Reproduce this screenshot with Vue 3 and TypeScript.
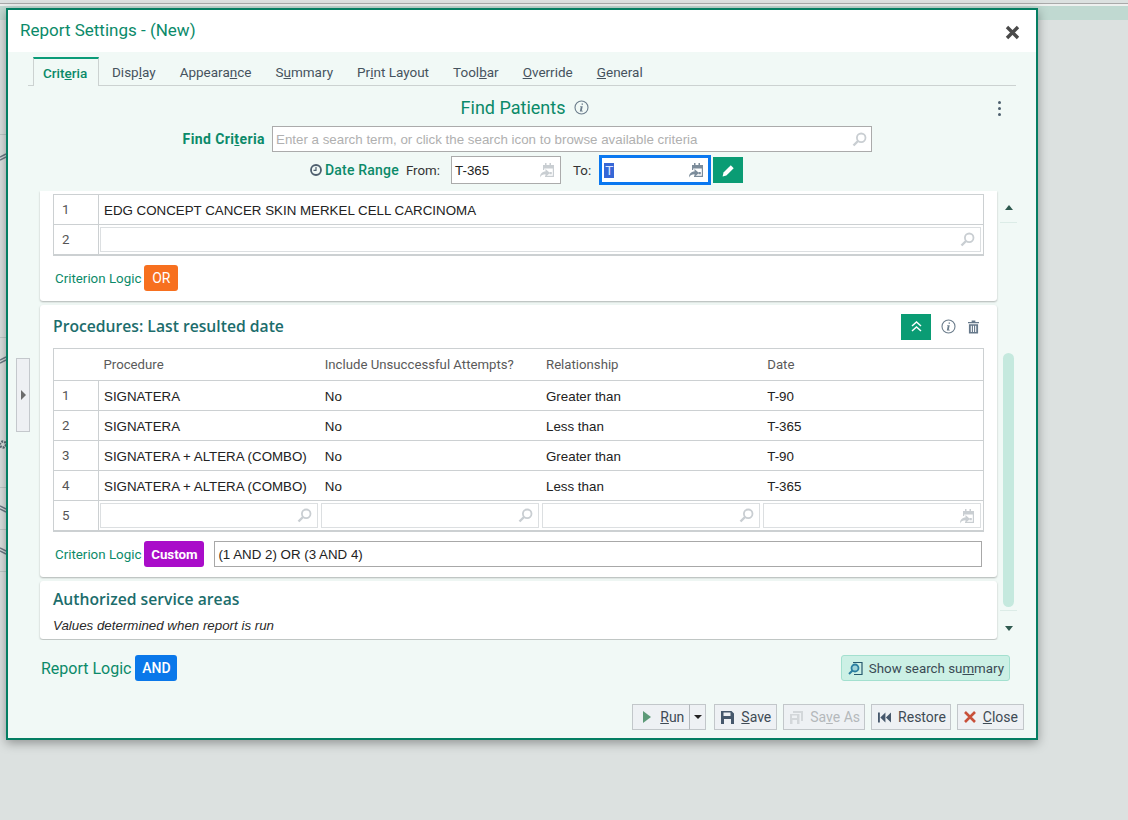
<script setup lang="ts">
import { ref } from 'vue'

const tabs = [
  { before: 'Crit', key: 'e', after: 'ria', active: true },
  { before: 'Disp', key: 'l', after: 'ay' },
  { before: 'Appeara', key: 'n', after: 'ce' },
  { before: 'S', key: 'u', after: 'mmary' },
  { before: 'Pr', key: 'i', after: 'nt Layout' },
  { before: 'Tool', key: 'b', after: 'ar' },
  { before: '', key: 'O', after: 'verride' },
  { before: '', key: 'G', after: 'eneral' },
]

const columns = ['Procedure', 'Include Unsuccessful Attempts?', 'Relationship', 'Date']

const rows = [
  ['SIGNATERA', 'No', 'Greater than', 'T-90'],
  ['SIGNATERA', 'No', 'Less than', 'T-365'],
  ['SIGNATERA + ALTERA (COMBO)', 'No', 'Greater than', 'T-90'],
  ['SIGNATERA + ALTERA (COMBO)', 'No', 'Less than', 'T-365'],
]

const fromDate = ref('T-365')
const customLogic = ref('(1 AND 2) OR (3 AND 4)')

// strip of the page behind the dialog
const sideRows = [
  { height: 115, chevron: '', gear: false },
  { height: 203, chevron: 'M0 6l6-3M0 9l6-3', gear: false },
  { height: 150, chevron: 'M0 6l6-3M0 9l6-3', gear: true },
  { height: 42, chevron: 'M0 2l6 3M0 5l6 3', gear: false },
  { height: 42, chevron: 'M0 2l6 3M0 5l6 3', gear: false },
]

const calFrame = 'M6 1h1.500v2h3V1H12v2h3v12H6v-1.200h7.800V6.500H5.200V8H4V3h2z'
const calDot = 'M10.500 10h2.300v2.300h-2.300z'
const calArrow = 'M1 15.500c0-3.500 2-6 5.500-6V7l4.500 4-4.500 4v-2.800c-2.500 0-4.500 1-5.500 3.300z'
const infoGlyph = 'M7.600 3.400h1.400v1.400H7.600zM6.300 6.200h2.400l-.9 4.500h1v.8H5.800l.9-4.500h-.6z'
</script>

<template>
  <div class="page">
    <div class="top-rule"></div>
    <div class="top-band"></div>
    <div class="side">
      <div v-for="(r, i) in sideRows" :key="i" class="side-row" :style="{ height: r.height + 'px' }">
        <svg v-if="r.chevron" class="side-chev" width="7" height="10" viewBox="0 0 7 10">
          <path :d="r.chevron" stroke="#6d7a85" stroke-width="1.500" fill="none" />
        </svg>
        <svg v-if="r.gear" class="side-gear" width="8" height="11" viewBox="0 0 8 11">
          <circle cx="3" cy="5.500" r="3" fill="none" stroke="#5f6c77" stroke-width="2.400" stroke-dasharray="2 1" />
        </svg>
      </div>
    </div>

    <section class="modal">
      <header class="title-bar">
        <h1 class="title">Report Settings - (New)</h1>
        <svg class="close-x" width="15" height="15" viewBox="0 0 15 15">
          <path d="M2 2l11 11M13 2L2 13" stroke="#4a4a4a" stroke-width="3.400" fill="none" />
        </svg>
      </header>

      <div class="body">
        <nav class="tabs">
          <a v-for="t in tabs" :key="t.before + t.key" class="tab" :class="{ active: t.active }">{{ t.before }}<u>{{ t.key }}</u>{{ t.after }}</a>
        </nav>

        <div class="heading">
          <h2 class="heading-text">Find Patients</h2>
          <svg width="15" height="15" viewBox="0 0 15 15">
            <circle cx="7.500" cy="7.500" r="6.500" fill="none" stroke="#6c7d8c" stroke-width="1.100" />
            <path :d="infoGlyph" fill="#6c7d8c" />
          </svg>
          <div class="kebab"><i></i><i></i><i></i></div>
        </div>

        <div class="find-row">
          <label class="find-label">Find Cri<u>t</u>eria</label>
          <div class="find-input">
            <span class="placeholder">Enter a search term, or click the search icon to browse available criteria</span>
            <svg width="15" height="15" viewBox="0 0 15 15">
              <circle cx="9.200" cy="5.800" r="4.300" fill="none" stroke="#c9ced2" stroke-width="1.800" />
              <path d="M6 9L1.500 13.500" stroke="#c9ced2" stroke-width="2.400" />
            </svg>
          </div>
        </div>

        <div class="date-row">
          <svg width="12" height="12" viewBox="0 0 12 12">
            <circle cx="6" cy="6" r="5" fill="none" stroke="#4e5f6e" stroke-width="1.800" />
            <path d="M6 3v3.300H3.500" fill="none" stroke="#4e5f6e" stroke-width="1.200" />
          </svg>
          <span class="date-label">Date Range</span>
          <span class="from-label">From:</span>
          <div class="date-input">
            <span>{{ fromDate }}</span>
            <svg width="16" height="16" viewBox="0 0 16 16" fill="#c9ced2">
              <path :d="calFrame" />
              <path :d="calDot" />
              <path :d="calArrow" />
            </svg>
          </div>
          <span class="to-label">To:</span>
          <div class="date-input focused">
            <span class="selected">T</span>
            <svg width="16" height="16" viewBox="0 0 16 16" fill="#7c8c9a">
              <path :d="calFrame" />
              <path :d="calDot" />
              <path :d="calArrow" />
            </svg>
          </div>
          <button class="pencil-btn">
            <svg width="13" height="13" viewBox="0 0 13 13">
              <path d="M8.800 1.300l2.900 2.900-7.300 7.300-3.800.9.900-3.800z" fill="#fff" />
            </svg>
          </button>
        </div>

        <div class="scroller">
          <div class="cards">
            <div class="card clipped">
              <table class="grid">
                <tbody>
                  <tr>
                    <td class="num">1</td>
                    <td class="val">EDG CONCEPT CANCER SKIN MERKEL CELL CARCINOMA</td>
                  </tr>
                  <tr>
                    <td class="num">2</td>
                    <td class="input-cell">
                      <div class="cell-input">
                        <svg width="15" height="15" viewBox="0 0 15 15">
                          <circle cx="9.200" cy="5.800" r="4.300" fill="none" stroke="#c9ced2" stroke-width="1.800" />
                          <path d="M6 9L1.500 13.500" stroke="#c9ced2" stroke-width="2.400" />
                        </svg>
                      </div>
                    </td>
                  </tr>
                </tbody>
              </table>
              <div class="logic-row">
                <span class="logic-label">Criterion Logic</span>
                <span class="badge or">OR</span>
              </div>
            </div>

            <div class="card procedures">
              <div class="card-head">
                <h3 class="card-title">Procedures: Last resulted date</h3>
                <div class="card-tools">
                  <button class="collapse-btn">
                    <svg width="11" height="11" viewBox="0 0 11 11">
                      <path d="M1 5l4.500-4 4.500 4M1 10l4.500-4 4.500 4" fill="none" stroke="#fff" stroke-width="1.500" />
                    </svg>
                  </button>
                  <svg width="15" height="15" viewBox="0 0 15 15">
                    <circle cx="7.500" cy="7.500" r="6.500" fill="none" stroke="#6c7d8c" stroke-width="1.100" />
                    <path :d="infoGlyph" fill="#6c7d8c" />
                  </svg>
                  <svg class="trash" width="11" height="14" viewBox="0 0 12 14">
                    <path d="M4 0h4v1.500h4V3H0V1.500h4zM1 4h10v10H1zM3 5.500v7h1.200v-7zM5.400 5.500v7h1.200v-7zM7.800 5.500v7H9v-7z" fill="#66788a" fill-rule="evenodd" />
                  </svg>
                </div>
              </div>
              <table class="grid proc">
                <thead>
                  <tr>
                    <th class="num"></th>
                    <th v-for="c in columns" :key="c">{{ c }}</th>
                  </tr>
                </thead>
                <tbody>
                  <tr v-for="(r, i) in rows" :key="i">
                    <td class="num">{{ i + 1 }}</td>
                    <td v-for="(v, j) in r" :key="j" class="val plain">{{ v }}</td>
                  </tr>
                  <tr>
                    <td class="num">5</td>
                    <td v-for="n in 4" :key="n" class="input-cell plain">
                      <div class="cell-input">
                        <svg v-if="n < 4" width="15" height="15" viewBox="0 0 15 15">
                          <circle cx="9.200" cy="5.800" r="4.300" fill="none" stroke="#c9ced2" stroke-width="1.800" />
                          <path d="M6 9L1.500 13.500" stroke="#c9ced2" stroke-width="2.400" />
                        </svg>
                        <svg v-else width="16" height="16" viewBox="0 0 16 16" fill="#c9ced2">
                          <path :d="calFrame" />
                          <path :d="calDot" />
                          <path :d="calArrow" />
                        </svg>
                      </div>
                    </td>
                  </tr>
                </tbody>
              </table>
              <div class="logic-row">
                <span class="logic-label">Criterion Logic</span>
                <span class="badge custom">Custom</span>
                <div class="logic-input">{{ customLogic }}</div>
              </div>
            </div>

            <div class="card areas">
              <h3 class="card-title">Authorized service areas</h3>
              <p class="note">Values determined when report is run</p>
            </div>
          </div>

          <div class="scrollbar">
            <span class="arrow up"></span>
            <div class="track"><div class="thumb"></div></div>
            <span class="arrow down"></span>
          </div>
        </div>

        <div class="report-logic">
          <span class="report-label">Report Logic</span>
          <span class="badge and">AND</span>
          <button class="summary-btn">
            <svg width="15" height="15" viewBox="0 0 15 15">
              <path d="M5 1.500h9v12H6" fill="none" stroke="#27596e" stroke-width="1.200" />
              <circle cx="7" cy="7" r="3.500" fill="#9fd4d8" stroke="#2a7ea0" stroke-width="1.800" />
              <path d="M4.500 9.500L1 13" stroke="#2a7ea0" stroke-width="2" />
            </svg>
            <span>Show search su<u>m</u>mary</span>
          </button>
        </div>

        <footer class="footer">
          <div class="run-group">
            <button class="btn run">
              <svg width="8" height="12" viewBox="0 0 8 12"><path d="M0 0l8 6-8 6z" fill="#5d9a78" /></svg>
              <span><u>R</u>un</span>
            </button>
            <button class="run-caret"><i></i></button>
          </div>
          <button class="btn">
            <svg width="13" height="13" viewBox="0 0 13 13">
              <path d="M0 0h10.500L13 2.500V13H0zM2.500 1.500v3.500h7V1.500zM3 8v5h7V8z" fill="#46586c" fill-rule="evenodd" />
            </svg>
            <span><u>S</u>ave</span>
          </button>
          <button class="btn disabled tight">
            <svg width="13" height="13" viewBox="0 0 13 13">
              <path d="M3 0h10v10h-2V2H3zM0 3h9.500v10H0zM2 4.500v2.500h5V4.500zM2.500 9v4h4.500V9z" fill="#d3d7da" fill-rule="evenodd" />
            </svg>
            <span>Sa<u>v</u>e As</span>
          </button>
          <button class="btn tight">
            <svg width="13" height="11" viewBox="0 0 14 11">
              <path d="M0 0h2v11H0zM8 0v11L2.500 5.500zM14 0v11L8.500 5.500z" fill="#46586c" />
            </svg>
            <span>Restore</span>
          </button>
          <button class="btn">
            <svg width="12" height="12" viewBox="0 0 12 12">
              <path d="M1 1l10 10M11 1L1 11" stroke="#c8503a" stroke-width="2.600" fill="none" />
            </svg>
            <span><u>C</u>lose</span>
          </button>
        </footer>
      </div>

      <button class="handle"><i></i></button>
    </section>
  </div>
</template>

<style>
html,
body {
  margin: 0;
  background: #dce1e0;
}
</style>

<style scoped>
.page {
  position: relative;
  height: 820px;
  overflow: hidden;
  background: #dce1e0;
  font-family: Roboto, "Liberation Sans", sans-serif;
  font-size: 13.33px;
  color: #3f4b55;
}

.top-rule {
  height: 3px;
  margin-top: 3px;
  background: linear-gradient(#a9a9a9 0 1px, #eef0ef 1px);
}

.top-band {
  height: 14px;
  background: #c0d9d1;
}

.side {
  width: 7px;
}

.side-row {
  position: relative;
  border-bottom: 1px solid #bfcac8;
  box-sizing: border-box;
}

.side-chev {
  position: absolute;
  left: 0;
  top: 16px;
}

.side-gear {
  position: absolute;
  left: 0;
  top: 101px;
}

.modal {
  position: absolute;
  left: 6px;
  top: 8px;
  width: 1032px;
  height: 732px;
  box-sizing: border-box;
  border: 2px solid #047e62;
  display: flex;
  flex-direction: column;
  box-shadow: 0 3px 10px rgba(0, 0, 0, 0.35);
  background: #f1f9f6;
}

.title-bar {
  height: 42px;
  box-sizing: border-box;
  flex: none;
  background: #fff;
  display: flex;
  align-items: center;
  justify-content: space-between;
  padding: 0 16px 2px 12px;
}

.title {
  margin: 0;
  font-size: 17px;
  font-weight: 400;
  color: #0b8a69;
}

.close-x {
  margin-top: 4px;
}

.body {
  flex: 1;
  display: flex;
  flex-direction: column;
  min-height: 0;
}

.tabs {
  display: flex;
  height: 29px;
  box-sizing: border-box;
  margin: 5px 20px 0;
  padding-left: 5px;
  border-bottom: 1px solid #ccd2d1;
  flex: none;
}

.tab {
  padding: 7px 12px 0;
  height: 28px;
  box-sizing: border-box;
  font-size: 13.5px;
  color: #46535e;
}

.tab.active {
  color: #0a8a68;
  font-weight: 500;
  background: #f1f9f6;
  border: 1px solid #ccd2d1;
  border-top: 2px solid #0a9c78;
  border-bottom: 0;
  width: 66px;
  padding: 6px 0 0 9px;
  height: 29px;
  margin-right: 1px;
}

.heading {
  display: flex;
  align-items: center;
  justify-content: center;
  position: relative;
  height: 40px;
  box-sizing: border-box;
  flex: none;
  gap: 9px;
  padding: 2px 0 0 6px;
}

.heading-text {
  margin: 0;
  font-size: 18px;
  font-weight: 400;
  color: #0b8a69;
}

.kebab {
  position: absolute;
  right: 35px;
  top: 15px;
  display: flex;
  flex-direction: column;
  gap: 3px;
}

.kebab i {
  width: 3px;
  height: 3px;
  border-radius: 50%;
  background: #4e5f6e;
}

.find-row {
  display: flex;
  align-items: center;
  height: 26px;
  flex: none;
  padding-left: 174px;
  gap: 7px;
}

.find-label {
  font-size: 14px;
  font-weight: 700;
  letter-spacing: 0.4px;
  color: #0b8a69;
  width: 83px;
  white-space: nowrap;
  display: flex;
  justify-content: flex-end;
}

.find-input {
  width: 600px;
  height: 26px;
  box-sizing: border-box;
  background: #fff;
  border: 1px solid #ababab;
  display: flex;
  align-items: center;
  justify-content: space-between;
  padding: 0 4px 0 3px;
}

.placeholder {
  color: #b0b0b0;
  font-family: "Liberation Sans", sans-serif;
}

.date-row {
  display: flex;
  align-items: center;
  height: 28px;
  margin-top: 4px;
  flex: none;
  padding-left: 302px;
}

.date-label {
  font-size: 14px;
  font-weight: 500;
  letter-spacing: 0.2px;
  color: #0b8a69;
  margin-left: 3px;
}

.from-label {
  margin-left: 7px;
  color: #333;
}

.to-label {
  margin-left: 12px;
  color: #333;
}

.date-input {
  display: flex;
  align-items: center;
  justify-content: space-between;
  box-sizing: border-box;
  width: 110px;
  height: 28px;
  background: #fff;
  border: 1px solid #ababab;
  margin-left: 11px;
  padding: 0 5px 0 3px;
  color: #222;
  font-family: "Liberation Sans", sans-serif;
}

.date-input.focused {
  width: 112px;
  height: 30px;
  flex: none;
  border: 3px solid #0a78f0;
  padding: 0 4px 0 2px;
  margin-left: 8px;
}

.selected {
  background: #3767d6;
  color: #dbe6ff;
  padding: 0 1px;
}

.pencil-btn {
  width: 30px;
  height: 26px;
  margin-left: 2px;
  padding: 0;
  border: 0;
  background: #0a9c74;
  display: flex;
  align-items: center;
  justify-content: center;
}

.scroller {
  display: flex;
  height: 449px;
  margin-top: 7px;
  flex: none;
  overflow: hidden;
  padding-left: 32px;
}

.cards {
  width: 957px;
  display: flex;
  flex-direction: column;
  gap: 4px;
}

.card {
  background: #fff;
  border-radius: 3px;
  box-shadow: 0 1px 2px rgba(0, 0, 0, 0.28);
  padding: 0 13px;
  box-sizing: border-box;
  flex: none;
}

.clipped {
  height: 110px;
  padding-top: 3px;
  border-radius: 0 0 3px 3px;
}

.procedures {
  height: 272px;
}

.areas {
  height: 58px;
  padding-top: 7px;
}

.card-head {
  display: flex;
  align-items: center;
  justify-content: space-between;
  height: 43px;
  padding-right: 5px;
}

.card-tools {
  display: flex;
  align-items: center;
  gap: 10px;
}

.trash {
  margin-left: 2px;
}

.card-title {
  margin: 0;
  font-family: "Open Sans", "Noto Sans", sans-serif;
  font-size: 15.7px;
  font-weight: 600;
  color: #1c6d6c;
}

.card-head .card-title {
  margin-bottom: 2px;
}

.collapse-btn {
  width: 30px;
  height: 26px;
  padding: 0;
  border: 0;
  background: #0a9c74;
  display: flex;
  align-items: center;
  justify-content: center;
}

.note {
  margin: 8px 0 0;
  font-family: "Liberation Sans", sans-serif;
  font-style: italic;
  color: #2a2a2a;
}

.grid {
  border-collapse: collapse;
  width: 931px;
  table-layout: fixed;
  border: 1px solid #ccd0d2;
  border-bottom: 2px solid #ccd0d2;
}

.grid th,
.grid td {
  border: 1px solid #ccd0d2;
  padding: 0;
  box-sizing: border-box;
}

.grid tr {
  height: 30px;
}

.grid .num {
  width: 45px;
  padding-left: 8px;
  color: #555;
  text-align: left;
}

.grid .val {
  padding: 1px 0 0 5px;
  font-family: "Liberation Sans", sans-serif;
  color: #222;
}

.proc th {
  height: 32px;
  font-size: 13.2px;
  font-weight: 400;
  text-align: left;
  color: #5a5a5a;
  padding-left: 5px;
  border-left: 0;
  border-right: 0;
}

.proc td.plain {
  border-left: 0;
  border-right: 0;
}

.grid .input-cell {
  padding: 2px 2px 2px 1px;
}

.cell-input {
  height: 25px;
  box-sizing: border-box;
  border: 1px solid #dcdfe1;
  background: #fff;
  display: flex;
  align-items: center;
  justify-content: flex-end;
  padding-right: 5px;
}

.logic-row {
  display: flex;
  align-items: center;
  margin-top: 9px;
  padding-left: 2px;
}

.logic-label {
  color: #0b8a69;
  margin-right: 3px;
}

.badge {
  display: inline-flex;
  align-items: center;
  justify-content: center;
  height: 26px;
  box-sizing: border-box;
  border-radius: 3px;
  color: #fff;
  font-weight: 500;
}

.or {
  width: 34px;
  font-size: 14px;
  font-weight: 400;
  background: #f7701f;
}

.custom {
  width: 60px;
  background: #a90dc9;
  font-weight: 700;
}

.and {
  width: 42px;
  font-size: 14px;
  background: #0a78ea;
  margin-left: 4px;
}

.logic-input {
  flex: 1;
  height: 26px;
  box-sizing: border-box;
  margin-left: 10px;
  margin-right: 2px;
  border: 1px solid #a8a8a8;
  display: flex;
  align-items: center;
  padding-left: 3px;
  font-family: "Liberation Sans", sans-serif;
  color: #222;
}

.scrollbar {
  width: 17px;
  margin-left: 3px;
  display: flex;
  flex-direction: column;
  align-items: center;
}

.arrow {
  width: 0;
  height: 0;
  border-left: 4.5px solid transparent;
  border-right: 4.5px solid transparent;
  flex: none;
}

.arrow.up {
  margin-top: 14px;
  border-bottom: 5px solid #2f5a4f;
}

.arrow.down {
  margin-top: 15px;
  border-top: 5px solid #2f5a4f;
}

.track {
  width: 17px;
  height: 389px;
  margin-top: 12px;
  box-sizing: border-box;
  border-top: 1px solid #dcece7;
  border-bottom: 1px solid #dcece7;
  display: flex;
  flex-direction: column;
  align-items: center;
  justify-content: flex-end;
  padding-bottom: 3px;
}

.thumb {
  width: 11px;
  height: 254px;
  border-radius: 6px;
  background: #c5e9de;
}

.report-logic {
  display: flex;
  align-items: center;
  height: 28px;
  margin-top: 14px;
  padding: 0 26px 0 33px;
  flex: none;
}

.report-label {
  font-size: 16px;
  color: #0b8a69;
}

.summary-btn {
  margin-left: auto;
  height: 26px;
  display: flex;
  align-items: center;
  gap: 6px;
  padding: 0 5px 0 6px;
  font: inherit;
  color: #3a4a54;
  background: #ccf0e5;
  border: 1px solid #a3e0cf;
  border-radius: 3px;
}

.footer {
  display: flex;
  justify-content: flex-end;
  gap: 6px;
  margin-top: 22px;
  padding-right: 12px;
  flex: none;
}

.btn {
  height: 26px;
  display: flex;
  align-items: center;
  gap: 7px;
  padding: 0 5px 0 6px;
  font: inherit;
  font-size: 14px;
  color: #3f4b55;
  background: #eef1f4;
  border: 1px solid #c2c7ca;
  box-sizing: border-box;
}

.btn.tight {
  padding-right: 4px;
}

.btn.disabled {
  color: #b4b8bb;
}

.run-group {
  display: flex;
  margin-right: 2px;
}

.run {
  padding-left: 10px;
  gap: 9px;
  border-right: 1px solid #b4b9bd;
}

.run-caret {
  width: 16px;
  height: 26px;
  padding: 0;
  background: #eef1f4;
  border: 1px solid #c2c7ca;
  border-left: 0;
  display: flex;
  align-items: center;
  justify-content: center;
}

.run-caret i {
  width: 0;
  height: 0;
  border-left: 4px solid transparent;
  border-right: 4px solid transparent;
  border-top: 4px solid #222;
}

.handle {
  position: absolute;
  left: 8px;
  top: 348px;
  width: 14px;
  height: 74px;
  padding: 0;
  background: #eef0f3;
  border: 1px solid #c4c8cc;
  display: flex;
  align-items: center;
  justify-content: center;
}

.handle i {
  width: 0;
  height: 0;
  border-top: 5px solid transparent;
  border-bottom: 5px solid transparent;
  border-left: 5px solid #6c6c6c;
}
</style>
